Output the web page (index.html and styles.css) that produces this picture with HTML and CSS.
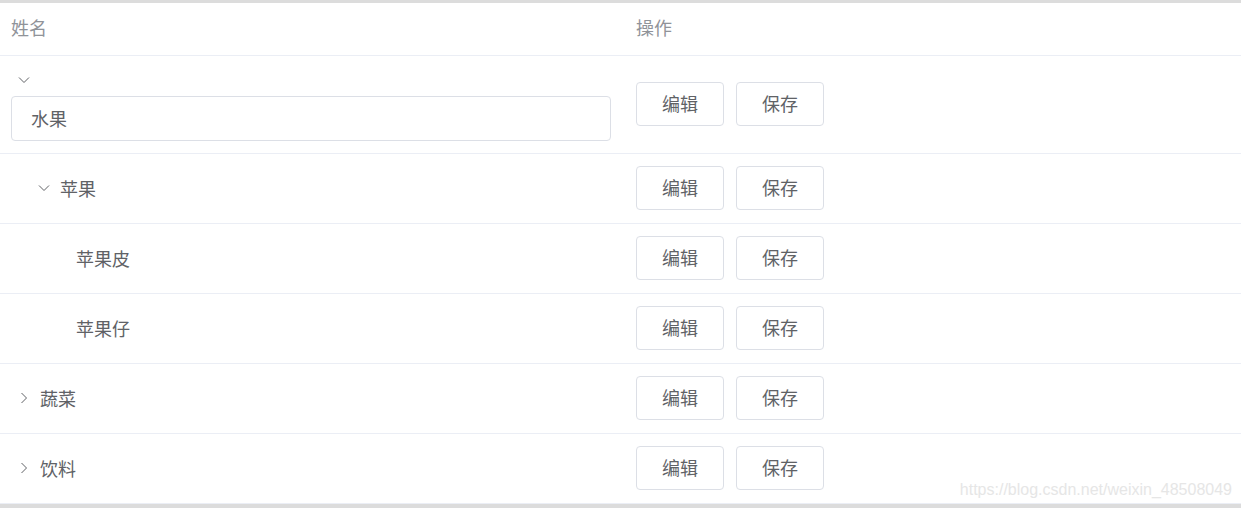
FILE: index.html
```html
<!DOCTYPE html>
<html>
<head>
<meta charset="utf-8">
<link rel="stylesheet" href="styles.css">
</head>
<body>
<div class="page">
  <div class="topbar"></div>
  <div class="table">
    <div class="row head">
      <div class="c1">姓名</div>
      <div class="c2">操作</div>
    </div>
    <div class="row first">
      <div class="c1 stack">
        <span class="exp"><svg width="12" height="8" viewBox="0 0 12 8"><path d="M1 1.5 L6 6.5 L11 1.5" fill="none" stroke="#606266" stroke-width="1"/></svg></span>
        <div class="input">水果</div>
      </div>
      <div class="c2"><button class="btn">编辑</button><button class="btn">保存</button></div>
    </div>
    <div class="row">
      <div class="c1"><span class="ind1"></span><span class="exp"><svg width="12" height="8" viewBox="0 0 12 8"><path d="M1 1.5 L6 6.5 L11 1.5" fill="none" stroke="#606266" stroke-width="1"/></svg></span>苹果</div>
      <div class="c2"><button class="btn">编辑</button><button class="btn">保存</button></div>
    </div>
    <div class="row">
      <div class="c1"><span class="ind2"></span><span class="leaf"></span>苹果皮</div>
      <div class="c2"><button class="btn">编辑</button><button class="btn">保存</button></div>
    </div>
    <div class="row">
      <div class="c1"><span class="ind2"></span><span class="leaf"></span>苹果仔</div>
      <div class="c2"><button class="btn">编辑</button><button class="btn">保存</button></div>
    </div>
    <div class="row">
      <div class="c1"><span class="exp"><svg width="8" height="12" viewBox="0 0 8 12"><path d="M1.5 1 L6.5 6 L1.5 11" fill="none" stroke="#606266" stroke-width="1"/></svg></span>蔬菜</div>
      <div class="c2"><button class="btn">编辑</button><button class="btn">保存</button></div>
    </div>
    <div class="row">
      <div class="c1"><span class="exp"><svg width="8" height="12" viewBox="0 0 8 12"><path d="M1.5 1 L6.5 6 L1.5 11" fill="none" stroke="#606266" stroke-width="1"/></svg></span>饮料</div>
      <div class="c2"><button class="btn">编辑</button><button class="btn">保存</button></div>
    </div>
  </div>
  <div class="bottombar"></div>
  <div class="watermark">https://blog.csdn.net/weixin_48508049</div>
</div>
</body>
</html>
```
FILE: styles.css
```css
html, body {
  margin: 0;
  padding: 0;
  background: #ffffff;
}
.page {
  position: relative;
  width: 1241px;
  height: 508px;
  overflow: hidden;
  font-family: "Noto Sans CJK SC", "Noto Sans", sans-serif;
  font-size: 18px;
  color: #606266;
}
.topbar {
  height: 3px;
  background: #dcdcdc;
}
.bottombar {
  height: 6px;
  background: #dcdcdc;
}
.row {
  display: flex;
  height: 69px;
  box-sizing: content-box;
  border-bottom: 1px solid #ebeef5;
  align-items: center;
}
.row:not(.first) {
  height: 67px;
  padding-bottom: 2px;
}
.row.head {
  height: 48px;
  padding-bottom: 4px;
  color: #909399;
}
.row.first {
  height: 97px;
}
.c1 {
  width: 614px;
  padding-left: 11px;
  display: flex;
  align-items: center;
}
.c1.stack {
  flex-direction: column;
  align-items: flex-start;
  justify-content: flex-start;
  align-self: stretch;
  padding-top: 17px;
  box-sizing: border-box;
  width: 625px;
}
.first .c2 {
  padding-bottom: 2px;
}
.c2 {
  padding-left: 11px;
  display: flex;
  align-items: center;
  gap: 12px;
}
.exp {
  display: inline-flex;
  width: 25px;
  height: 20px;
  align-items: center;
  justify-content: center;
  margin-right: 4px;
}
.stack .exp {
  margin-right: 0;
  height: 14px;
  margin-bottom: 9px;
}
.ind1 {
  display: inline-block;
  width: 20px;
}
.ind2 {
  display: inline-block;
  width: 40px;
}
.leaf {
  display: inline-block;
  width: 25px;
}
.input {
  width: 600px;
  height: 45px;
  box-sizing: border-box;
  border: 1px solid #dcdfe6;
  border-radius: 4px;
  padding-left: 19px;
  padding-bottom: 2px;
  display: flex;
  align-items: center;
  color: #606266;
}
.btn {
  width: 88px;
  height: 44px;
  box-sizing: border-box;
  border: 1px solid #dcdfe6;
  border-radius: 4px;
  background: #ffffff;
  color: #606266;
  font-family: "Noto Sans CJK SC", "Noto Sans", sans-serif;
  font-size: 18px;
  padding: 0 0 2px 0;
  margin: 0;
}
.watermark {
  position: absolute;
  right: 9px;
  bottom: 9px;
  font-family: "Liberation Sans", Arial, sans-serif;
  font-size: 16px;
  color: #e6e6e6;
}
```
